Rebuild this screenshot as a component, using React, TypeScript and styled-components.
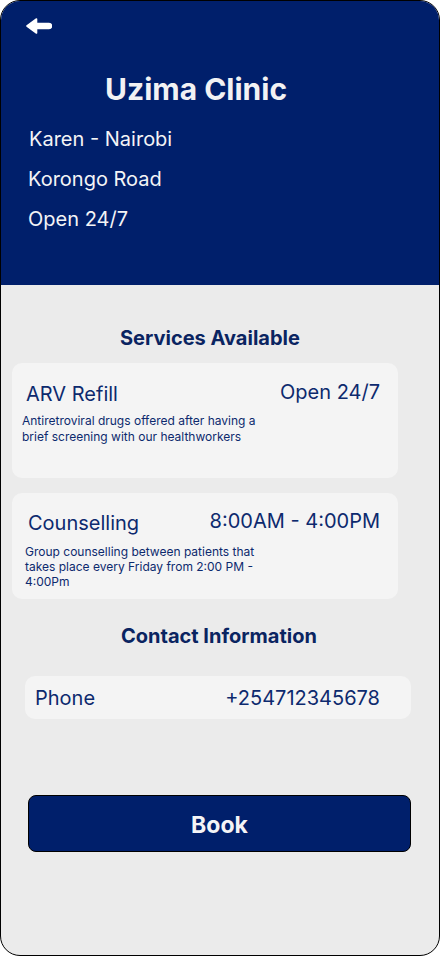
import styled, { createGlobalStyle } from "styled-components";

const GlobalStyle = createGlobalStyle`
  * { box-sizing: border-box; }
  body {
    margin: 0;
    font-family: Inter, "Noto Sans", sans-serif;
    background: #ffffff;
  }
`;

const services = [
  {
    name: "ARV Refill",
    hours: "Open 24/7",
    text: "Antiretroviral drugs offered after having a brief screening with our healthworkers",
    height: 115,
    pad: "19px 18px 0 10px",
    titleIndent: 4,
    descTop: 7,
    descLine: 16,
  },
  {
    name: "Counselling",
    hours: "8:00AM - 4:00PM",
    text: "Group counselling between patients that takes place every Friday from 2:00 PM - 4:00Pm",
    height: 106,
    pad: "18px 18px 0 13px",
    titleIndent: 3,
    descTop: 9,
    descLine: 15,
  },
];

const BackArrow = () => (
  <svg width="26" height="16" viewBox="0 0 26 16">
    <path d="M10.5 1 L1 8 L10.5 15 Z" fill="#fff" stroke="#fff" strokeWidth="1.6" strokeLinejoin="round" />
    <line x1="10" y1="8" x2="23" y2="8" stroke="#fff" strokeWidth="6.4" strokeLinecap="round" />
  </svg>
);

const App = () => {
  return (
    <>
      <GlobalStyle />
      <Frame>
        <Header>
          <BackBtn aria-label="Back">
            <BackArrow />
          </BackBtn>
          <ClinicName>Uzima Clinic</ClinicName>
          <InfoList>
            <InfoLine $indent={29}>Karen - Nairobi</InfoLine>
            <InfoLine $indent={28}>Korongo Road</InfoLine>
            <InfoLine $indent={28}>Open 24/7</InfoLine>
          </InfoList>
        </Header>

        <Content>
          <SectionTitle $indent={120} $top={41}>Services Available</SectionTitle>
          <CardList>
            {services.map((s) => (
              <ServiceCard key={s.name} $height={s.height} $pad={s.pad}>
                <CardRow $indent={s.titleIndent}>
                  <ServiceName>{s.name}</ServiceName>
                  <ServiceHours>{s.hours}</ServiceHours>
                </CardRow>
                <ServiceText $top={s.descTop} $line={s.descLine}>
                  {s.text}
                </ServiceText>
              </ServiceCard>
            ))}
          </CardList>

          <SectionTitle $indent={121} $top={25}>Contact Information</SectionTitle>
          <ContactCard>
            <ContactLabel>Phone</ContactLabel>
            <ContactLabel>+254712345678</ContactLabel>
          </ContactCard>

          <BookButton>Book</BookButton>
        </Content>
      </Frame>
    </>
  );
};

const Frame = styled.div`
  width: 440px;
  height: 956px;
  border: 1px solid #000;
  border-radius: 20px;
  overflow: hidden;
  background: #ebebeb;
  display: flex;
  flex-direction: column;
`;

const Header = styled.header`
  height: 284px;
  background: #001f6b;
  padding-top: 17px;
  display: flex;
  flex-direction: column;
  flex-shrink: 0;
`;

const BackBtn = styled.button`
  width: 26px;
  height: 16px;
  margin-left: 25px;
  padding: 0;
  border: none;
  background: transparent;
  display: flex;
  cursor: pointer;
`;

const ClinicName = styled.h1`
  margin: 37px 0 0 104px;
  font-size: 30px;
  line-height: 36px;
  font-weight: 700;
  color: #f2f2f4;
`;

const InfoList = styled.div`
  margin-top: 20px;
  display: flex;
  flex-direction: column;
  gap: 16px;
`;

const InfoLine = styled.p<{ $indent: number }>`
  margin: 0 0 0 ${(p) => p.$indent - 1}px;
  font-size: 20px;
  line-height: 24px;
  font-weight: 400;
  color: #f4f4f6;
`;

const Content = styled.main`
  flex: 1;
  display: flex;
  flex-direction: column;
`;

const SectionTitle = styled.h2<{ $indent: number; $top: number }>`
  margin: ${(p) => p.$top}px 0 0 ${(p) => p.$indent - 1}px;
  font-size: 20px;
  line-height: 24px;
  font-weight: 700;
  color: #0a2461;
`;

const CardList = styled.div`
  margin: 13px 0 0 11px;
  width: 386px;
  display: flex;
  flex-direction: column;
  gap: 15px;
`;

const ServiceCard = styled.div<{ $height: number; $pad: string }>`
  height: ${(p) => p.$height}px;
  padding: ${(p) => p.$pad};
  background: #f4f4f4;
  border-radius: 10px;
`;

const CardRow = styled.div<{ $indent: number }>`
  padding-left: ${(p) => p.$indent}px;
  display: flex;
  justify-content: space-between;
  align-items: flex-start;
`;

const ServiceName = styled.h3`
  margin: 0;
  font-size: 20px;
  line-height: 24px;
  font-weight: 400;
  color: #0d2a6e;
`;

const ServiceHours = styled.span`
  margin-top: -2px;
  font-size: 20px;
  line-height: 24px;
  font-weight: 400;
  color: #0d2a6e;
`;

const ServiceText = styled.p<{ $top: number; $line: number }>`
  margin: ${(p) => p.$top}px 0 0;
  max-width: 246px;
  font-size: 12px;
  line-height: ${(p) => p.$line}px;
  color: #0d2a6e;
`;

const ContactCard = styled.div`
  margin: 28px 0 0 24px;
  width: 386px;
  height: 43px;
  padding: 10px 31px 0 10px;
  background: #f4f4f4;
  border-radius: 10px;
  display: flex;
  justify-content: space-between;
  align-items: flex-start;
`;

const ContactLabel = styled.span`
  font-size: 20px;
  line-height: 24px;
  color: #0d2a6e;
`;

const BookButton = styled.button`
  margin: 76px 0 0 27px;
  width: 383px;
  height: 57px;
  border: 1px solid #000;
  border-radius: 8px;
  background: #001f6b;
  color: #f4f4f6;
  font-family: Inter, "Noto Sans", sans-serif;
  font-size: 23px;
  font-weight: 700;
  display: flex;
  align-items: center;
  justify-content: center;
  padding: 2px 0 0;
  cursor: pointer;
`;

export default App;
